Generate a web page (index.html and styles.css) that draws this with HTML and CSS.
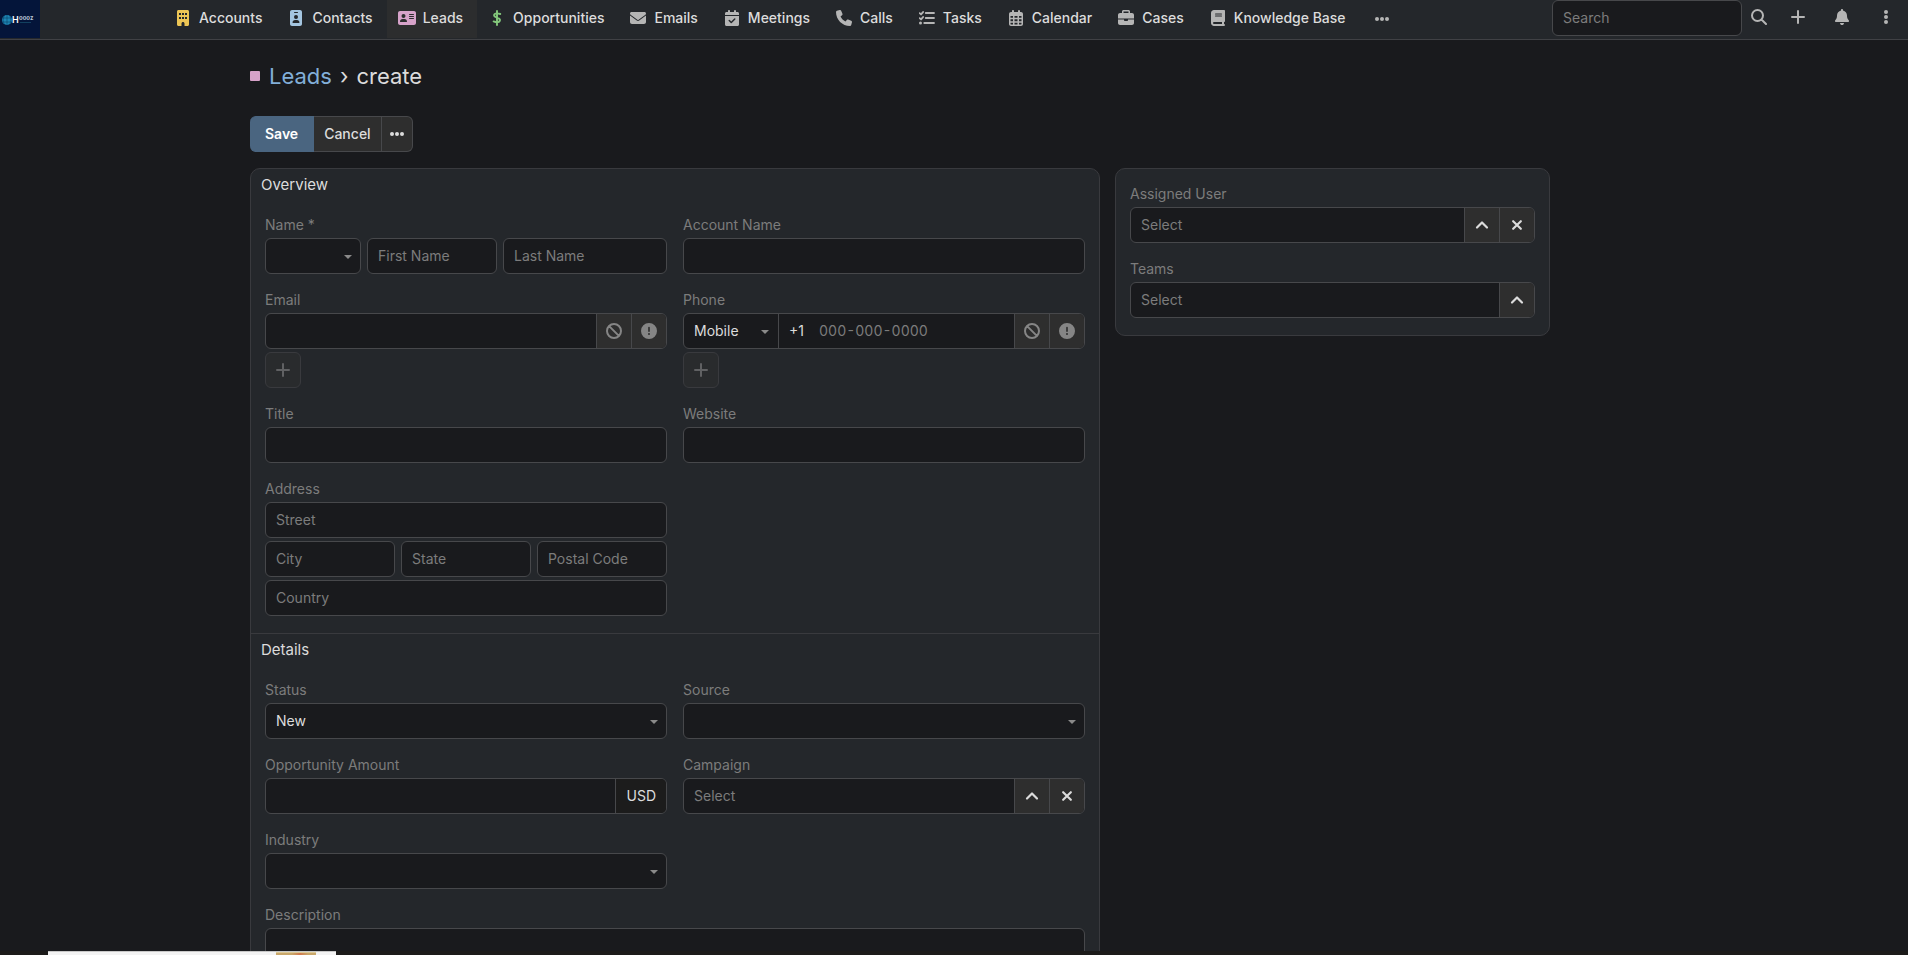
FILE: index.html
```html
<!DOCTYPE html>
<html lang="en">
<head>
<meta charset="utf-8">
<title>Leads › create</title>
<link rel="stylesheet" href="styles.css">
</head>
<body>
<svg class="sprite" aria-hidden="true">
  <symbol id="i-building" viewBox="0 0 384 512"><path fill-rule="evenodd" d="M48 0C21 0 0 21 0 48V464c0 27 21 48 48 48h96V432c0-27 21-48 48-48s48 21 48 48v80h96c27 0 48-21 48-48V48c0-27-21-48-48-48zM64 224h64v64H64zm96 0h64v64h-64zm96 0h64v64h-64zM64 96h64v64H64zm96 0h64v64h-64zm96 0h64v64h-64z"/></symbol>
  <symbol id="i-badge" viewBox="0 0 384 512"><path fill-rule="evenodd" d="M64 0C29 0 0 29 0 64V448c0 35 29 64 64 64H320c35 0 64-29 64-64V64c0-35-29-64-64-64zM144 64h96a16 16 0 0 1 0 32h-96a16 16 0 0 1 0-32zM192 160a64 64 0 1 1 0 128 64 64 0 1 1 0-128zM80 400c0-44 36-80 80-80h64c44 0 80 36 80 80 0 9-7 16-16 16H96c-9 0-16-7-16-16z"/></symbol>
  <symbol id="i-card" viewBox="0 0 576 448"><path fill-rule="evenodd" d="M64 0C29 0 0 29 0 64V384c0 35 29 64 64 64H512c35 0 64-29 64-64V64c0-35-29-64-64-64zM176 96a64 64 0 1 1 0 128 64 64 0 1 1 0-128zM64 335c0-44 36-79 80-79h64c44 0 80 36 80 79 0 10-7 17-16 17H80c-9 0-16-7-16-17zM368 96H496a16 16 0 0 1 0 32H368a16 16 0 0 1 0-32zm0 64H496a16 16 0 0 1 0 32H368a16 16 0 0 1 0-32zm0 64H496a16 16 0 0 1 0 32H368a16 16 0 0 1 0-32z"/></symbol>
  <symbol id="i-dollar" viewBox="0 0 320 512"><path d="M160 32V480M264 128C225 114 190 108 158 108c-52 0-86 22-90 58-5 44 34 60 92 76 65 18 100 38 94 86-5 44-45 64-98 64-34 0-70-12-104-25" fill="none" stroke="currentColor" stroke-width="62" stroke-linecap="round"/></symbol>
  <symbol id="i-mail" viewBox="0 0 512 384"><path d="M48 0C22 0 0 22 0 48c0 15 7 29 19 38L237 250c11 8 27 8 38 0L493 86c12-9 19-23 19-38 0-26-22-48-48-48zM0 112V320c0 35 29 64 64 64H448c35 0 64-29 64-64V112L294 275c-22 17-54 17-76 0z"/></symbol>
  <symbol id="i-calcheck" viewBox="0 0 448 512"><path fill-rule="evenodd" d="M128 0c18 0 32 14 32 32v32h128V32a32 32 0 0 1 64 0v32h48c27 0 48 21 48 48v48H0v-48c0-27 21-48 48-48h48V32c0-18 14-32 32-32zM0 192H448V464c0 27-21 48-48 48H48c-27 0-48-21-48-48zM329 305a24 24 0 0 0-34-34l-95 95-47-47a24 24 0 0 0-34 34l64 64c9 9 25 9 34 0z"/></symbol>
  <symbol id="i-phone" viewBox="0 0 512 512"><path d="M165 25c-8-19-29-29-49-24L28 25C12 30 0 45 0 64 0 311 201 512 448 512c18 0 34-12 39-29l24-88c5-20-5-41-24-49l-96-40c-16-7-35-2-47 12l-40 49C234 334 178 278 145 208l49-40c14-11 19-30 12-47z"/></symbol>
  <symbol id="i-tasks" viewBox="0 0 512 512"><path d="M20 102l45 40 65-76M20 262l45 40 65-76M216 96H480M216 256H480M168 416H480" fill="none" stroke="currentColor" stroke-width="58" stroke-linecap="round" stroke-linejoin="round"/><circle cx="48" cy="416" r="48"/></symbol>
  <symbol id="i-cal" viewBox="0 0 448 512"><path fill-rule="evenodd" d="M128 0c18 0 32 14 32 32v32h128V32a32 32 0 0 1 64 0v32h32c35 0 64 29 64 64V448c0 35-29 64-64 64H64c-35 0-64-29-64-64V128c0-35 29-64 64-64h32V32c0-18 14-32 32-32zM48 192v56h80v-56zm128 0v56h96v-56zm144 0v56h80v-56zM48 296v64h80v-64zm128 0v64h96v-64zm144 0v64h80v-64zM48 408v40c0 9 7 16 16 16h64v-56zm128 0v56h96v-56zm144 0v56h64c9 0 16-7 16-16v-40z"/></symbol>
  <symbol id="i-case" viewBox="0 0 512 512"><path fill-rule="evenodd" d="M176 0h160c26 0 48 22 48 48v48h64c35 0 64 29 64 64v112H0V160c0-35 29-64 64-64h64V48c0-26 22-48 48-48zM176 48v48h160V48zM0 304h192v16c0 18 14 32 32 32h64c18 0 32-14 32-32v-16h192v112c0 35-29 64-64 64H64c-35 0-64-29-64-64z"/></symbol>
  <symbol id="i-book" viewBox="0 0 448 512"><path fill-rule="evenodd" d="M96 0C43 0 0 43 0 96V416c0 53 43 96 96 96H416a32 32 0 0 0 0-64v-64c18 0 32-14 32-32V32c0-18-14-32-32-32zM96 384h256v64H96a32 32 0 0 1 0-64zM144 112h192a16 16 0 0 1 0 32H144a16 16 0 0 1 0-32zm0 64h192a16 16 0 0 1 0 32H144a16 16 0 0 1 0-32z"/></symbol>
  <symbol id="i-dots" viewBox="0 0 14 4"><circle cx="2" cy="2" r="2"/><circle cx="7" cy="2" r="2"/><circle cx="12" cy="2" r="2"/></symbol>
  <symbol id="i-vdots" viewBox="0 0 4 14"><circle cx="2" cy="2" r="2"/><circle cx="2" cy="7" r="2"/><circle cx="2" cy="12" r="2"/></symbol>
  <symbol id="i-search" viewBox="0 0 512 512"><path d="M208 32a176 176 0 1 1 0 352 176 176 0 1 1 0-352zM335 335L480 480" fill="none" stroke="currentColor" stroke-width="64" stroke-linecap="round"/></symbol>
  <symbol id="i-plus" viewBox="0 0 14 14"><path d="M7 1V13M1 7H13" fill="none" stroke="currentColor" stroke-width="2" stroke-linecap="round"/></symbol>
  <symbol id="i-bell" viewBox="0 0 448 512"><path d="M224 0c-18 0-32 14-32 32v19C119 66 64 131 64 208v19c0 47-17 92-48 127l-8 9c-8 9-10 23-5 34s16 19 29 19H416c13 0 24-7 29-19s3-25-5-34l-8-9c-31-35-48-80-48-127v-19c0-77-55-142-128-157V32c0-18-14-32-32-32zM269 493c12-12 19-28 19-45H160c0 17 7 33 19 45s28 19 45 19 33-7 45-19z"/></symbol>
  <symbol id="i-ban" viewBox="0 0 512 512"><path d="M256 32a224 224 0 1 1 0 448 224 224 0 1 1 0-448zM100 100L412 412" fill="none" stroke="currentColor" stroke-width="64"/></symbol>
  <symbol id="i-alert" viewBox="0 0 512 512"><path fill-rule="evenodd" d="M256 0a256 256 0 1 1 0 512 256 256 0 1 1 0-512zM256 118c-15 0-26 11-26 24v118c0 15 11 26 26 26s26-11 26-26V142c0-13-11-24-26-24zM256 322a32 32 0 1 0 0 64 32 32 0 1 0 0-64z"/></symbol>
  <symbol id="i-up" viewBox="0 0 14 14"><path d="M2 9.500L7 4.500L12 9.500" fill="none" stroke="currentColor" stroke-width="2.200" stroke-linecap="round" stroke-linejoin="round"/></symbol>
  <symbol id="i-x" viewBox="0 0 14 14"><path d="M2.500 2.500L11.500 11.500M11.500 2.500L2.500 11.500" fill="none" stroke="currentColor" stroke-width="2.500" stroke-linecap="round"/></symbol>
</svg>

<header class="navbar">
  <a class="logo" href="#" aria-label="Home">
    <svg viewBox="0 0 40 38"><rect width="40" height="38" fill="#04153a"/><circle cx="7" cy="20" r="5" fill="#1d86b4"/><path d="M2 18h10M2 22h10M7 15v10M4 16q-2 4 0 8M10 16q2 4 0 8" stroke="#0a3f68" fill="none" stroke-width=".6"/><text x="12" y="23" class="logo-h">H</text><text x="19" y="20" class="logo-s">oooz</text><path d="M20 22.500h11" stroke="#12405f"/></svg>
  </a>
  <nav class="tabs">
    <a class="tab" href="#"><span class="ico yellow"><svg width="12" height="16"><use href="#i-building"/></svg></span>Accounts</a>
    <a class="tab" href="#"><span class="ico blue"><svg width="12" height="16"><use href="#i-badge"/></svg></span>Contacts</a>
    <a class="tab active" href="#"><span class="ico pink"><svg width="18" height="14"><use href="#i-card"/></svg></span>Leads</a>
    <a class="tab" href="#"><span class="ico green"><svg width="10" height="16"><use href="#i-dollar"/></svg></span>Opportunities</a>
    <a class="tab" href="#"><span class="ico"><svg width="16" height="12"><use href="#i-mail"/></svg></span>Emails</a>
    <a class="tab" href="#"><span class="ico"><svg width="14" height="16"><use href="#i-calcheck"/></svg></span>Meetings</a>
    <a class="tab" href="#"><span class="ico"><svg width="16" height="16"><use href="#i-phone"/></svg></span>Calls</a>
    <a class="tab" href="#"><span class="ico"><svg width="16" height="16"><use href="#i-tasks"/></svg></span>Tasks</a>
    <a class="tab" href="#"><span class="ico"><svg width="14" height="16"><use href="#i-cal"/></svg></span>Calendar</a>
    <a class="tab" href="#"><span class="ico"><svg width="16" height="16"><use href="#i-case"/></svg></span>Cases</a>
    <a class="tab" href="#"><span class="ico"><svg width="14" height="16"><use href="#i-book"/></svg></span>Knowledge Base</a>
    <button class="more" aria-label="More"><svg width="14" height="4"><use href="#i-dots"/></svg></button>
  </nav>
  <div class="tools">
    <input class="control search" type="text" placeholder="Search" aria-label="Search">
    <button class="tool near" aria-label="Search"><svg width="16" height="16"><use href="#i-search"/></svg></button>
    <button class="tool" aria-label="Create"><svg width="14" height="14"><use href="#i-plus"/></svg></button>
    <button class="tool" aria-label="Notifications"><svg width="14" height="16"><use href="#i-bell"/></svg></button>
    <button class="tool" aria-label="Menu"><svg width="4" height="14"><use href="#i-vdots"/></svg></button>
  </div>
</header>

<main class="content">
  <h1 class="title"><span class="swatch"></span><a href="#">Leads</a><span>›</span><span>create</span></h1>
  <div class="actions">
    <button class="btn primary">Save</button>
    <button class="btn">Cancel</button>
    <button class="btn dots" aria-label="More actions"><svg width="14" height="4"><use href="#i-dots"/></svg></button>
  </div>

  <div class="record">
    <form class="panel">
      <section class="section">
        <h2>Overview</h2>
        <div class="fields">
          <div class="field">
            <label for="first">Name *</label>
            <div class="name-row">
              <span class="select"><select class="control" aria-label="Salutation"><option></option></select></span>
              <input class="control" id="first" placeholder="First Name">
              <input class="control" placeholder="Last Name" aria-label="Last Name">
            </div>
          </div>
          <div class="field"><label for="account">Account Name</label><input class="control" id="account"></div>
          <div class="field">
            <label for="email">Email</label>
            <div class="group">
              <input id="email" type="email">
              <button type="button" class="addon muted" aria-label="Opted out"><svg width="16" height="16"><use href="#i-ban"/></svg></button>
              <button type="button" class="addon muted" aria-label="Invalid"><svg width="16" height="16"><use href="#i-alert"/></svg></button>
            </div>
            <button type="button" class="add" aria-label="Add email"><svg width="14" height="14"><use href="#i-plus"/></svg></button>
          </div>
          <div class="field">
            <label for="phone">Phone</label>
            <div class="group">
              <span class="select phone-type"><select aria-label="Phone type"><option>Mobile</option></select></span>
              <span class="code">+1</span>
              <input id="phone" class="digits" type="tel" placeholder="000-000-0000">
              <button type="button" class="addon muted" aria-label="Opted out"><svg width="16" height="16"><use href="#i-ban"/></svg></button>
              <button type="button" class="addon muted" aria-label="Invalid"><svg width="16" height="16"><use href="#i-alert"/></svg></button>
            </div>
            <button type="button" class="add" aria-label="Add phone"><svg width="14" height="14"><use href="#i-plus"/></svg></button>
          </div>
          <div class="field"><label for="title">Title</label><input class="control" id="title"></div>
          <div class="field"><label for="website">Website</label><input class="control" id="website"></div>
          <div class="field">
            <label for="street">Address</label>
            <div class="address">
              <input class="control wide" id="street" placeholder="Street">
              <input class="control" placeholder="City" aria-label="City">
              <input class="control" placeholder="State" aria-label="State">
              <input class="control" placeholder="Postal Code" aria-label="Postal Code">
              <input class="control wide" placeholder="Country" aria-label="Country">
            </div>
          </div>
        </div>
      </section>
      <section class="section">
        <h2>Details</h2>
        <div class="fields">
          <div class="field"><label for="status">Status</label><span class="select"><select class="control" id="status"><option>New</option></select></span></div>
          <div class="field"><label for="source">Source</label><span class="select"><select class="control" id="source"><option></option></select></span></div>
          <div class="field"><label for="amount">Opportunity Amount</label><div class="group"><input id="amount"><span class="currency">USD</span></div></div>
          <div class="field">
            <label for="campaign">Campaign</label>
            <div class="group">
              <input id="campaign" placeholder="Select">
              <button type="button" class="addon" aria-label="Select campaign"><svg width="14" height="14"><use href="#i-up"/></svg></button>
              <button type="button" class="addon" aria-label="Clear campaign"><svg width="12" height="12"><use href="#i-x"/></svg></button>
            </div>
          </div>
          <div class="field"><label for="industry">Industry</label><span class="select"><select class="control" id="industry"><option></option></select></span></div>
          <div class="field full"><label for="description">Description</label><textarea class="control" id="description"></textarea></div>
        </div>
      </section>
    </form>

    <aside class="panel side">
      <div class="field">
        <label for="user">Assigned User</label>
        <div class="group">
          <input id="user" placeholder="Select">
          <button type="button" class="addon" aria-label="Select user"><svg width="14" height="14"><use href="#i-up"/></svg></button>
          <button type="button" class="addon" aria-label="Clear user"><svg width="12" height="12"><use href="#i-x"/></svg></button>
        </div>
      </div>
      <div class="field">
        <label for="teams">Teams</label>
        <div class="group">
          <input id="teams" placeholder="Select">
          <button type="button" class="addon" aria-label="Select team"><svg width="14" height="14"><use href="#i-up"/></svg></button>
        </div>
      </div>
    </aside>
  </div>
</main>
<div class="edge"><span class="edge-tab"><span class="edge-chip"></span></span></div>
</body>
</html>
```
FILE: styles.css
```css
* { box-sizing: border-box; }
:root {
  --bg: #191a1d;
  --panel: #24272b;
  --line: #393a3e;
  --border: #47484b;
  --button: #2e2e2e;
  --text: #dcdcdc;
  --muted: #7c7c7c;
}
body {
  margin: 0;
  height: 100vh;
  overflow: hidden;
  background: var(--bg);
  color: var(--text);
  font: 14px/20px Inter, sans-serif;
}
svg { display: block; fill: currentColor; }
.sprite { display: none; }
a { color: inherit; text-decoration: none; }
button, input, select, textarea { font: inherit; color: inherit; margin: 0; }
button { padding: 0; border: 0; background: none; display: flex; align-items: center; justify-content: center; }

.navbar {
  display: flex;
  height: 40px;
  background: var(--panel);
  border-bottom: 1px solid #404145;
}
.logo { width: 40px; height: 38px; }
.logo-h { font: 600 9px Inter, sans-serif; fill: #fff; }
.logo-s { font: 700 6px Inter, sans-serif; fill: #b9c4d4; }
.tabs { display: flex; flex: 1; margin-left: 123px; height: 38px; }
.tab {
  display: flex;
  align-items: center;
  gap: 6px;
  padding: 0 14px 2px 10px;
  font-weight: 500;
  white-space: nowrap;
}
.tab.active { background: #2c2d2e; }
.ico { width: 20px; display: flex; justify-content: center; color: #b5b5b5; }
.yellow { color: #edc555; }
.blue { color: #a4c5e0; }
.pink { color: #d6a2c9; }
.green { color: #83c77b; }
.more { padding: 0 15px; color: #b5b5b5; }
.tools { display: flex; align-items: flex-start; color: #b5b5b5; }
.tool { width: 44px; height: 34px; }
.tool.near { width: 34px; }
.control.search { width: 190px; }

.content { padding: 0 358px 0 250px; }
.title {
  display: flex;
  align-items: center;
  gap: 8px;
  margin: 0;
  padding: 20px 0 24px;
  font-size: 22px;
  line-height: 32px;
  font-weight: 400;
}
.title a { color: #82afd9; }
.swatch { width: 10px; height: 10px; margin-right: 1px; border-radius: 1px; background: #d6a2c9; }
.actions { display: flex; margin-bottom: 16px; }
.btn {
  height: 36px;
  padding: 0 10px;
  background: var(--button);
  border: 1px solid var(--border);
  border-left-width: 0;
  font-weight: 500;
}
.btn.primary { padding: 0 15px; background: #4a6580; border-color: #4a6580; color: #fff; font-weight: 600; border-radius: 6px 0 0 6px; }
.btn.dots { padding: 0 8px; border-radius: 0 6px 6px 0; }

.record {
  display: grid;
  grid-template-columns: 850fr 435fr;
  gap: 15px;
  align-items: start;
}
.panel { background: var(--panel); border: 1px solid var(--line); border-radius: 10px; }
.section { padding: 6px 14px 17px; }
.section + .section { border-top: 1px solid var(--line); }
h2 { margin: 0 0 20px -4px; font-size: 15px; line-height: 20px; font-weight: 400; }
.fields { display: grid; grid-template-columns: 1fr 1fr; gap: 16px; }
.full { grid-column: 1 / -1; }
.field { min-width: 0; }
.field > label { display: block; margin-bottom: 3px; color: var(--muted); }
.side { display: flex; flex-direction: column; gap: 16px; padding: 15px 14px 17px; }

.control, .group {
  width: 100%;
  height: 36px;
  background: var(--bg);
  border: 1px solid var(--border);
  border-radius: 6px;
}
.control { display: block; padding: 0 10px 1px; min-width: 0; }
textarea.control { height: 76px; resize: none; }
::placeholder { color: var(--muted); opacity: 1; }
select { appearance: none; }
.select { display: block; position: relative; }
.select::after {
  content: "";
  position: absolute;
  right: 9px;
  top: calc(50% - 1px);
  border: 4px solid transparent;
  border-top-color: #8a8a8a;
  border-bottom: 0;
}
.name-row { display: grid; grid-template-columns: 96px 130px 1fr; gap: 6px; }
.address { display: grid; grid-template-columns: 1fr 1fr 1fr; gap: 3px 6px; }
.wide { grid-column: 1 / -1; }

.group { display: flex; overflow: hidden; }
.group input { flex: 1; min-width: 0; padding: 0 10px; border: 0; background: none; }
.group select { width: 100%; height: 100%; padding: 0 10px; border: 0; background: none; }
.phone-type { width: 95px; border-right: 1px solid var(--border); }
.digits { font-variant-numeric: tabular-nums; }
.code { padding: 7px 5px 7px 10px; }
.addon { width: 35px; background: var(--button); border-left: 1px solid var(--border); }
.addon.muted { color: #858585; }
.currency { padding: 7px 10px; background: #1c1c1c; border-left: 1px solid var(--border); }
.add {
  width: 36px;
  height: 36px;
  margin-top: 3px;
  border: 1px solid var(--line);
  border-radius: 6px;
  background: #292b2d;
  color: #606163;
}

.edge { position: fixed; left: 0; right: 0; bottom: 0; height: 4px; padding-left: 48px; background: #1c1b1a; }
.edge-tab { display: flex; width: 288px; height: 4px; padding-left: 228px; background: #f3f3f3; border-top: 1px solid #c8c8c8; }
.edge-chip { width: 40px; background: linear-gradient(90deg, #c9a76a 40%, #d2794d 60%, #c9a76a 80%); border-top: 1px solid #ddc996; }
```
